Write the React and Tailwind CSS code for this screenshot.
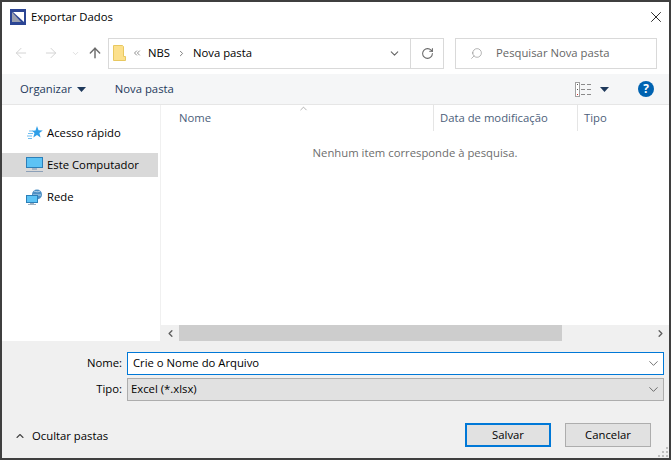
import { ArrowLeft, ArrowRight, ArrowUp, ChevronDown, ChevronLeft, ChevronRight, ChevronUp, ChevronsLeft, RotateCw, Search, X } from "lucide-react";

function Triangle({ className }) {
  return (
    <svg width="9" height="5" viewBox="0 0 9 5" className={className}>
      <path d="M0 0h9L4.5 5z" fill="currentColor" />
    </svg>
  );
}

function AppLogo() {
  return (
    <svg width="16" height="16" viewBox="0 0 16 16" className="shrink-0">
      <rect width="16" height="16" fill="#2b4594" />
      <path d="M3 3h11v10z" fill="#fff" />
      <path d="M2 3l9 10H2z" fill="#9a9fae" />
    </svg>
  );
}

function StarIcon() {
  return (
    <svg width="16" height="16" viewBox="0 0 16 16" className="shrink-0">
      <path d="M10 1l1.500 4.200 4.300.2-3.400 2.700 1.200 4.300-3.600-2.500-3.700 2.500 1.200-4.300L5 5.800l3.500-.4z" fill="#2f9fe8" />
      <path d="M2 6h4M1 8.500h5M0 11h5M1 13.500h4" stroke="#6fbdf0" strokeWidth="1" />
    </svg>
  );
}

function PcIcon() {
  return (
    <svg width="17" height="16" viewBox="0 0 17 16" className="shrink-0">
      <rect x="0.500" y="0.500" width="16" height="10" fill="#5cc3f5" stroke="#2c7fb8" />
      <rect x="6" y="11" width="5" height="2" fill="#a5b4c4" />
      <rect y="14" width="17" height="1" fill="#8ca0b8" />
    </svg>
  );
}

function NetworkIcon() {
  return (
    <svg width="17" height="17" viewBox="0 0 17 17" className="shrink-0">
      <circle cx="11" cy="5.500" r="5" fill="#4d8fc4" />
      <path d="M8 2c2 1 5 1 6 0M7 6h8" stroke="#b8d8ee" strokeWidth="1" fill="none" />
      <rect x="0.500" y="6.500" width="11" height="7" fill="#5cc3f5" stroke="#2c7fb8" />
      <rect x="4" y="14" width="4" height="1" fill="#9fb0c0" />
      <rect x="2" y="15" width="8" height="1" fill="#9fb0c0" />
    </svg>
  );
}

function ViewsIcon() {
  return (
    <svg width="16" height="15" viewBox="0 0 16 15" className="shrink-0">
      <rect x="0.500" y="0.500" width="4" height="14" fill="#fff" stroke="#a0a0a0" />
      <rect x="2" y="2" width="1" height="1" fill="#555" />
      <rect x="2" y="7" width="1" height="1" fill="#555" />
      <rect x="2" y="12" width="1" height="1" fill="#d03030" />
      <path d="M6 2.500h4M12 2.500h4M6 7.500h4M12 7.500h4M6 12.500h4M12 12.500h4" stroke="#8a8a8a" />
    </svg>
  );
}

function Grip() {
  return (
    <svg width="11" height="11" viewBox="0 0 11 11" className="absolute right-0 bottom-0">
      <path d="M8 0h2v2H8zM4 4h2v2H4zM8 4h2v2H8zM0 8h2v2H0zM4 8h2v2H4zM8 8h2v2H8z" fill="#bfbfbf" />
    </svg>
  );
}

function NavItem({ icon, label, active }) {
  return (
    <div className={`mr-[2px] flex h-6 items-center gap-[3px] pl-[23px] ${active ? "bg-[#d9d9d9]" : ""}`}>
      <span className="flex w-[19px] justify-center">{icon}</span>
      <span>{label}</span>
    </div>
  );
}

export default function App() {
  return (
    <div className="flex h-[460px] w-[671px] flex-col overflow-hidden border-2 border-[#3f3f3f] bg-white font-['Open_Sans',sans-serif] text-[11.3px] text-black">
      <div className="flex h-[30px] shrink-0 items-center justify-between pl-2 pr-[4px]">
        <div className="flex items-center gap-[5px]">
          <AppLogo />
          <span>Exportar Dados</span>
        </div>
        <X size={18} strokeWidth={1.1} />
      </div>

      <div className="flex h-[42px] shrink-0 items-center pl-[11px] pr-[12px]">
        <ArrowLeft size={16} strokeWidth={1.5} className="shrink-0 text-[#d4d4d4]" />
        <ArrowRight size={16} strokeWidth={1.5} className="ml-[14px] shrink-0 text-[#d4d4d4]" />
        <ChevronDown size={9} strokeWidth={2} className="ml-[12px] shrink-0 text-[#d4d4d4]" />
        <ArrowUp size={16} strokeWidth={2.2} className="ml-[7px] shrink-0 text-[#6d6d6d]" />
        <div className="ml-[5px] flex h-[31px] w-[336px] shrink-0 items-center border border-[#d9d9d9] pl-[4px]">
          <svg width="13" height="16" viewBox="0 0 13 16" className="shrink-0">
            <path d="M0.500 0.500h9l1 1v10h2v4H0.500z" fill="#fce08c" stroke="#e8c860" />
          </svg>
          <ChevronsLeft size={10} strokeWidth={2} className="ml-[6px] text-[#777]" />
          <span className="ml-[6px]">NBS</span>
          <ChevronRight size={9} strokeWidth={2.5} className="ml-[7px] text-[#777]" />
          <span className="ml-[7px]">Nova pasta</span>
          <ChevronDown size={13} strokeWidth={2} className="ml-auto mr-[9px] text-[#666]" />
          <div className="flex h-full w-[33px] items-center justify-center border-l border-[#d9d9d9]">
            <RotateCw size={13} strokeWidth={1.9} className="text-[#666]" />
          </div>
        </div>
        <div className="ml-[11px] flex h-[31px] flex-1 items-center border border-[#d9d9d9] pl-[14px] text-[#666]">
          <Search size={13} strokeWidth={1} className="shrink-0 -scale-x-100 text-[#777]" />
          <span className="ml-[13px] whitespace-nowrap">Pesquisar Nova pasta</span>
        </div>
      </div>

      <div className="flex h-[31px] shrink-0 items-center border-b border-[#e6e6e6] bg-[#f5f6f7] pl-[18px] pr-[15px] text-[#1e395b]">
        <span>Organizar</span>
        <Triangle className="ml-[5px]" />
        <span className="ml-[29px]">Nova pasta</span>
        <div className="ml-auto"><ViewsIcon /></div>
        <Triangle className="ml-[9px] text-[#1e395b]" />
        <div className="ml-[29px] flex h-[16px] w-[16px] items-center justify-center rounded-full bg-[#0063b1] text-[12px] font-bold text-white">?</div>
      </div>

      <div className="flex min-h-0 flex-1">
        <div className="w-[159px] shrink-0 border-r border-[#f0f0f0] pt-[16px]">
          <NavItem icon={<StarIcon />} label="Acesso rápido" />
          <div className="h-2" />
          <NavItem icon={<PcIcon />} label="Este Computador" active />
          <div className="h-2" />
          <NavItem icon={<NetworkIcon />} label="Rede" />
        </div>
        <div className="flex min-w-0 flex-1 flex-col">
          <div className="relative flex h-[26px] shrink-0 items-center text-[#4c607a]">
            <ChevronUp size={11} strokeWidth={1.2} className="absolute left-[137px] -top-[2px] text-[#777]" />
            <span className="w-[272px] pl-[18px]">Nome</span>
            <span className="w-[144px] border-l border-[#e5e5e5] pl-[6px] leading-[26px]">Data de modificação</span>
            <span className="border-l border-[#e5e5e5] pl-[6px] leading-[26px]">Tipo</span>
          </div>
          <div className="flex-1 pt-[14px] text-center text-[#6d6d6d]">Nenhum item corresponde à pesquisa.</div>
          <div className="flex h-[16px] shrink-0 items-center bg-[#f0f0f0]">
            <div className="flex w-[18px] justify-center"><ChevronLeft size={11} strokeWidth={3} className="text-[#606060]" /></div>
            <div className="h-full w-[383px] bg-[#cdcdcd]" />
            <div className="ml-auto flex w-[17px] justify-center"><ChevronRight size={11} strokeWidth={3} className="text-[#606060]" /></div>
          </div>
        </div>
      </div>

      <div className="relative h-[117px] shrink-0 bg-[#f0f0f0]">
        <div className="flex flex-col gap-[3px] pt-[11px] pr-[5px]">
          <div className="flex items-center">
            <span className="w-[120px] text-right">Nome:</span>
            <div className="ml-[5px] flex h-[23px] flex-1 items-center justify-between border border-[#0078d7] bg-white pl-[5px] pr-[2px]">
              <span className="-mt-[1px]">Crie o Nome do Arquivo</span>
              <ChevronDown size={15} strokeWidth={1.2} className="text-[#444]" />
            </div>
          </div>
          <div className="flex items-center">
            <span className="w-[120px] text-right">Tipo:</span>
            <div className="ml-[5px] flex h-[23px] flex-1 items-center justify-between border border-[#adadad] bg-[#e1e1e1] pl-[3px] pr-[2px]">
              <span className="-mt-[1px]">Excel (*.xlsx)</span>
              <ChevronDown size={15} strokeWidth={1.2} className="text-[#444]" />
            </div>
          </div>
        </div>
        <div className="mt-[22px] flex items-center pl-[12px] pr-[18px]">
          <ChevronUp size={12} strokeWidth={2.2} className="mt-[2px] text-[#444]" />
          <span className="ml-[6px] mt-[2px]">Ocultar pastas</span>
          <button className="ml-auto h-[24px] w-[86px] border-2 border-[#0078d7] bg-[#e1e1e1]">Salvar</button>
          <button className="ml-[14px] h-[24px] w-[86px] border border-[#adadad] bg-[#e1e1e1]">Cancelar</button>
        </div>
        <Grip />
      </div>
    </div>
  );
}
